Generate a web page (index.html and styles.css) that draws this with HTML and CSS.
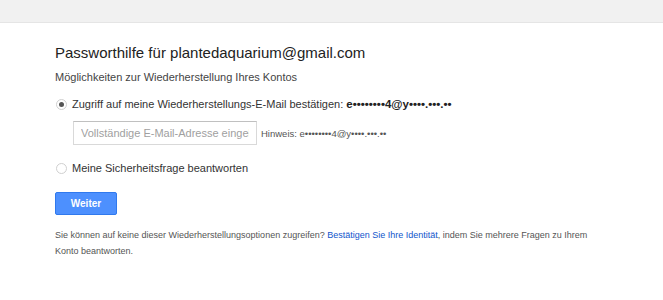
FILE: index.html
```html
<!DOCTYPE html>
<html lang="de">
<head>
    <meta charset="UTF-8">
    <title>Passworthilfe</title>
    <link rel="stylesheet" href="styles.css">
</head>
<body>

    <div class="topbar"></div>

    <div class="main">
        <h1>Passworthilfe für plantedaquarium@gmail.com</h1>
        <p class="subtitle">Möglichkeiten zur Wiederherstellung Ihres Kontos</p>

        <!-- Option 1 -->
        <div class="option first">
            <span class="radio checked"></span>
            <span class="label">Zugriff auf meine Wiederherstellungs-E-Mail bestätigen: <b class="masked">e••••••••4@y••••.•••.••</b></span>
        </div>
        <div class="email-row">
            <input type="text" class="email-input" placeholder="Vollständige E-Mail-Adresse eingeben">
            <span class="hint">Hinweis: e••••••••4@y••••.•••.••</span>
        </div>

        <!-- Option 2 -->
        <div class="option second">
            <span class="radio"></span>
            <span class="label">Meine Sicherheitsfrage beantworten</span>
        </div>

        <button type="button" class="btn">Weiter</button>

        <p class="footer">Sie können auf keine dieser Wiederherstellungsoptionen zugreifen? <a href="#">Bestätigen Sie Ihre Identität</a>, indem Sie mehrere Fragen zu Ihrem Konto beantworten.</p>
    </div>

</body>
</html>
```

FILE: styles.css
```css
body {
    margin: 0;
    font-family: 'Liberation Sans', Arial, sans-serif;
    color: #222;
    background: #fff;
}

.topbar {
    height: 22px;
    background-color: #f1f1f1;
    border-bottom: 1px solid #e5e5e5;
}

.main {
    padding: 18px 0 0 55px;
    width: 560px;
}

h1 {
    font-size: 15px;
    font-weight: normal;
    margin: 0;
    line-height: 24px;
    color: #222;
}

.subtitle {
    font-size: 11px;
    color: #444;
    margin: 4px 0 0;
    line-height: 16px;
}

.option {
    display: flex;
    align-items: center;
    margin-left: 1px;
    font-size: 11px;
    line-height: 16px;
}

.option.first {
    margin-top: 11px;
}

.option.second {
    margin-top: 15px;
}

.radio {
    width: 11px;
    height: 11px;
    border: 1px solid #d0d0d0;
    border-radius: 50%;
    box-sizing: border-box;
    margin-right: 5px;
    display: flex;
    align-items: center;
    justify-content: center;
    background: #fff;
}

.radio.checked::after {
    content: "";
    width: 5px;
    height: 5px;
    border-radius: 50%;
    background: #555;
}

.label {
    color: #333;
}

.masked {
    font-weight: bold;
    font-size: 11.5px;
    color: #222;
}

.email-row {
    display: flex;
    align-items: center;
    margin: 9px 0 0 18px;
}

.email-input {
    width: 184px;
    height: 24px;
    box-sizing: border-box;
    border: 1px solid #d9d9d9;
    border-top-color: #c0c0c0;
    padding: 0 7px;
    font-family: 'Liberation Sans', Arial, sans-serif;
    font-size: 11px;
    color: #333;
    outline: none;
}

.email-input::placeholder {
    color: #a0a0a0;
}

.hint {
    font-size: 9.5px;
    color: #555;
    margin-left: 4px;
}

.btn {
    display: block;
    margin-top: 16px;
    width: 62px;
    height: 23px;
    background-color: #4d90fe;
    border: 1px solid #3079ed;
    border-radius: 2px;
    color: #fff;
    font-family: 'Liberation Sans', Arial, sans-serif;
    font-size: 10px;
    font-weight: bold;
    cursor: pointer;
}

.footer {
    font-size: 9px;
    line-height: 16px;
    color: #555;
    margin: 12px 0 0;
    width: 545px;
}

.footer a {
    color: #15c;
    text-decoration: none;
}
```
